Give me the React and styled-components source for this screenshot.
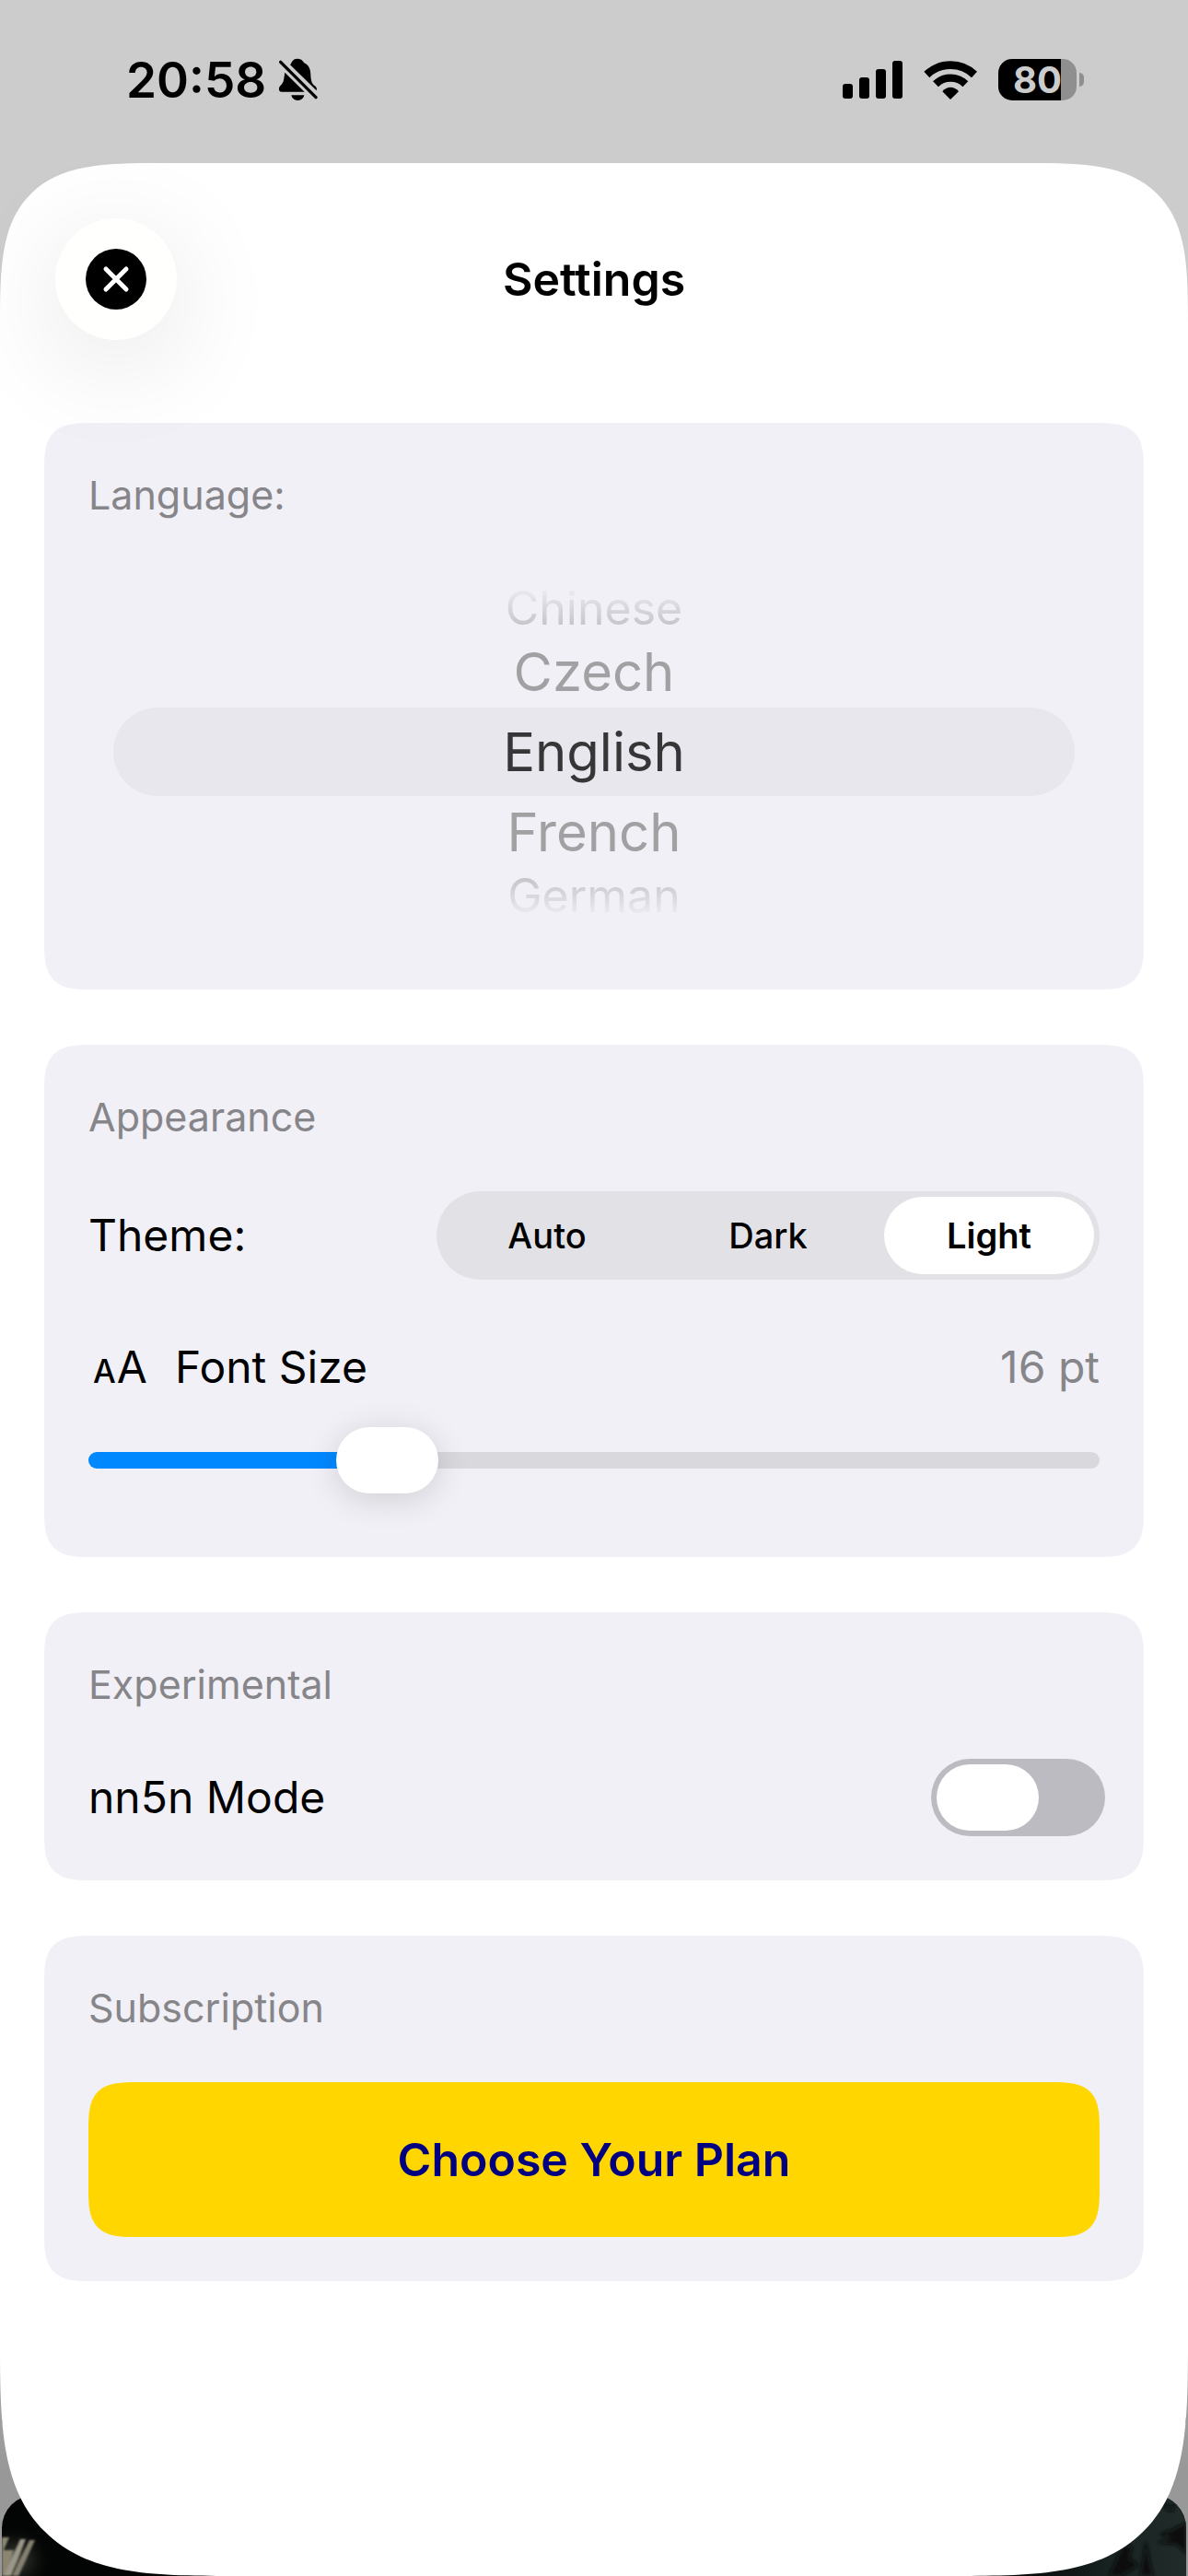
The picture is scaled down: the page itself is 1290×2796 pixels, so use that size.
import React, { useState } from 'react'
import styled, { createGlobalStyle, css } from 'styled-components'

const GlobalStyle = createGlobalStyle`
    * {
        box-sizing: border-box;
    }
    body {
        margin: 0;
        background-color: #cccccc;
        color: #000;
        font-family: Inter, "Liberation Sans", sans-serif;
        font-size: 48px;
        line-height: 66px;
    }
    button, input {
        font-family: inherit;
    }
`

// rounded corners, with the softer continuous curve where the browser knows it
const smoothCorners = (radius, wide) => css`
    border-radius: ${radius};
    @supports (corner-shape: superellipse(1.7)) {
        border-radius: ${wide};
        corner-shape: superellipse(1.7);
    }
`

const visuallyHidden = css`
    position: absolute;
    width: 1px;
    height: 1px;
    margin: 0;
    opacity: 0;
`

const Page = styled.div`
    position: relative;
    min-height: 100vh;
    display: flex;
    flex-direction: column;
    overflow: hidden;
`

const Backdrop = styled.div`
    position: absolute;
    inset: 0;
    display: flex;
    flex-direction: column;
    justify-content: flex-end;
    gap: 46px;
    padding: 0 2px;
    background: linear-gradient(#cccccc 80%, #989898 96%);
`

const BackdropCard = styled.div`
    height: 200px;
    background-color: #050505;
    border-radius: 0 0 40px 40px;
`

const BackdropPhoto = styled.div`
    height: 88px;
    display: flex;
    justify-content: space-between;
    align-items: flex-end;
    overflow: hidden;
    background-color: #030504;
    border-radius: 36px 36px 0 0;
`

const StatusBar = styled.div`
    position: relative;
    height: 177px;
    display: flex;
    align-items: center;
    justify-content: space-between;
    padding: 0 113px 4px 137px;
`

const StatusGroup = styled.div`
    display: flex;
    align-items: center;
    gap: ${props => props.$gap};
`

const Time = styled.span`
    font-size: 53px;
    font-weight: 600;
`

const Battery = styled.div`
    position: relative;
    width: 85px;
    height: 45px;
    margin-right: 8px;
    display: flex;
    align-items: center;
    justify-content: center;
    border-radius: 15px;
    background: linear-gradient(to right, #000 80%, #8f8f8f 80%);
    color: #cccccc;
    font-size: 40px;
    font-weight: 700;
    &::after {
        content: "";
        position: absolute;
        right: -8px;
        width: 5px;
        height: 15px;
        border-radius: 0 8px 8px 0;
        background-color: #8f8f8f;
    }
`

const Sheet = styled.main`
    position: relative;
    flex: 1;
    display: flex;
    flex-direction: column;
    gap: 60px;
    padding: 60px 48px 300px;
    background-color: #fff;
    ${smoothCorners("114px 114px 165px 165px", "174px 174px 252px 252px")}
`

const Header = styled.header`
    position: relative;
    z-index: 1;
    display: grid;
    grid-template-columns: 132px 1fr 132px;
    align-items: center;
    padding: 0 12px 30px;
`

const Title = styled.h1`
    margin: 0;
    text-align: center;
    font-size: 50px;
    font-weight: 600;
`

const CloseButton = styled.button`
    width: 132px;
    height: 132px;
    padding: 0;
    display: flex;
    align-items: center;
    justify-content: center;
    border: none;
    border-radius: 50%;
    background-color: #fffffe;
    box-shadow: 0 24px 120px rgba(0, 0, 0, 0.11);
    cursor: pointer;
`

const Card = styled.section`
    padding: 48px;
    background-color: #f1f0f6;
    ${smoothCorners("36px", "54px")}
`

const CardTitle = styled.h2`
    margin: 0 0 ${props => props.$tight ? "39px" : "51px"};
    color: #86858a;
    font-size: 43px;
    font-weight: 400;
    line-height: 60px;
`

const Wheel = styled.div`
    position: relative;
    display: flex;
    flex-direction: column;
    padding: 24px 27px;
`

const WheelRow = styled.label`
    display: flex;
    align-items: center;
    justify-content: center;
    cursor: pointer;
    ${props => wheelRows[props.$distance]}
`

const wheelRows = {
    "-2": css`
        height: 60px;
        font-size: 50px;
        color: #c6c5ca;
        mask-image: linear-gradient(rgba(0, 0, 0, 0.1) 15%, #000 80%);
    `,
    "-1": css`
        height: 78px;
        font-size: 58px;
        color: #a1a1a3;
    `,
    "0": css`
        height: 96px;
        font-size: 58px;
        color: #363638;
        background-color: #e8e7ed;
        border-radius: 48px;
    `,
    "1": css`
        height: 78px;
        font-size: 58px;
        color: #a1a1a3;
    `,
    "2": css`
        height: 60px;
        font-size: 50px;
        color: #c6c5ca;
        mask-image: linear-gradient(#000 20%, rgba(0, 0, 0, 0.1) 85%);
    `,
}

const HiddenRadio = styled.input`
    ${visuallyHidden}
`

const Row = styled.div`
    display: flex;
    align-items: center;
    justify-content: space-between;
`

const FontRow = styled(Row)`
    margin: 62px 0 11px;
`

const FontLabel = styled.label`
    display: flex;
    align-items: center;
    gap: 30px;
`

const LetterIcon = styled.span`
    display: flex;
    align-items: baseline;
    padding-left: 5px;
    gap: 1px;
`

const SmallLetter = styled.span`
    font-size: 35px;
    font-weight: 500;
    line-height: 40px;
`

const Value = styled.output`
    color: #86858a;
`

const Segmented = styled.div`
    position: relative;
    width: 720px;
    height: 96px;
    display: flex;
    border-radius: 48px;
    background-color: #e2e1e6;
`

const Segment = styled.label`
    flex: 1;
    margin: 6px;
    display: flex;
    align-items: center;
    justify-content: center;
    border-radius: 42px;
    font-size: 38px;
    font-weight: 500;
    cursor: pointer;
    &:has(input:checked) {
        background-color: #fff;
        font-weight: 600;
    }
`

const Slider = styled.input`
    display: block;
    width: 100%;
    height: 114px;
    margin: 0;
    appearance: none;
    background: none;
    cursor: pointer;
    &::-webkit-slider-runnable-track {
        height: 18px;
        border-radius: 9px;
        background: linear-gradient(to right, #0088ff var(--fill), #d9d8dd var(--fill));
    }
    &::-webkit-slider-thumb {
        appearance: none;
        width: 111px;
        height: 72px;
        margin-top: -27px;
        border-radius: 36px;
        background-color: #fff;
        box-shadow: 0 6px 36px rgba(0, 0, 0, 0.14);
    }
`

const Switch = styled.input`
    width: 189px;
    height: 84px;
    margin: 0 -6px 0 0;
    padding: 6px;
    display: flex;
    appearance: none;
    border-radius: 42px;
    background-color: #bcbbc1;
    cursor: pointer;
    &::before {
        content: "";
        width: 111px;
        height: 72px;
        border-radius: 36px;
        background-color: #fff;
    }
    &:checked {
        justify-content: flex-end;
        background-color: #34c759;
    }
`

const PlanButton = styled.button`
    width: 100%;
    height: 168px;
    border: none;
    background-color: #ffd600;
    color: #000080;
    font-size: 50px;
    font-weight: 600;
    cursor: pointer;
    ${smoothCorners("36px", "54px")}
`

const BellOffIcon = () => (
    <svg width="43" height="47" viewBox="903 194 129 141" aria-hidden="true">
        <path d="M942 216C947 212 948 196 966 196C984 196 983 208 992 212C1004 219 1009 232 1009 250C1010 272 1015 278 1023 285C1028 289 1030 293 1028 300Z" />
        <path d="M925 241L989 304H915C908 304 905 299 906 292C907 284 918 281 921 266C923 258 923 250 925 241Z" />
        <path d="M946 315H988C986 325 978 332 967 332C956 332 948 325 946 315Z" />
        <path d="M911 207L1026 322" stroke="#000" strokeWidth="10" strokeLinecap="round" />
    </svg>
)

const SignalIcon = () => (
    <svg width="65" height="41" viewBox="0 0 65 41" aria-hidden="true">
        <rect x="0" y="25" width="11" height="16" rx="3" />
        <rect x="18" y="18" width="11" height="23" rx="3" />
        <rect x="36" y="9" width="11" height="32" rx="3" />
        <rect x="54" y="0" width="11" height="41" rx="3" />
    </svg>
)

const WifiIcon = () => (
    <svg width="58" height="42" viewBox="430 195 174 126" aria-hidden="true">
        <path d="M440 240A112 112 0 0 1 595 240" fill="none" stroke="#000" strokeWidth="26" />
        <path d="M469 271A69 69 0 0 1 566 271" fill="none" stroke="#000" strokeWidth="25" />
        <path d="M491 295C505 277 530 277 544 295L517 321Z" />
    </svg>
)

const CloseIcon = () => (
    <svg width="66" height="66" viewBox="0 0 66 66" aria-hidden="true">
        <circle cx="33" cy="33" r="33" />
        <path d="M22 22L44 44M44 22L22 44" stroke="#fff" strokeWidth="5" strokeLinecap="round" />
    </svg>
)

const PhotoLights = () => (
    <svg width="200" height="84" viewBox="0 0 200 84" aria-hidden="true">
        <defs>
            <filter id="soft">
                <feGaussianBlur stdDeviation="1" />
            </filter>
            <radialGradient id="glow">
                <stop offset="0" stopColor="#4b4d42" />
                <stop offset="1" stopColor="#030504" stopOpacity="0" />
            </radialGradient>
        </defs>
        <ellipse cx="14" cy="66" rx="42" ry="38" fill="url(#glow)" />
        <g filter="url(#soft)">
            <path d="M0 42L8 42L2 56H13L4 84H0Z" fill="#8b8672" />
            <path d="M20 44H26L10 84H2Z" fill="#9b9789" />
            <path d="M30 45H36L18 84H11Z" fill="#85816f" />
        </g>
    </svg>
)

const PhotoForest = () => (
    <svg width="200" height="88" viewBox="0 0 200 88" aria-hidden="true">
        <defs>
            <linearGradient id="forest">
                <stop offset="0" stopColor="#030504" />
                <stop offset="0.6" stopColor="#182322" />
                <stop offset="1" stopColor="#202b2a" />
            </linearGradient>
            <filter id="haze">
                <feGaussianBlur stdDeviation="2" />
            </filter>
        </defs>
        <rect width="200" height="88" fill="url(#forest)" />
        <g filter="url(#haze)" fill="#0a1110">
            <path d="M200 30L184 38L170 43L184 46L168 52L190 54L200 64Z" />
            <path d="M156 48L160 70L164 88H150L153 70Z" />
            <path d="M176 6L182 14L188 8L186 18L178 16Z" />
            <path d="M132 54L142 56L138 68L148 76L130 88H116Z" />
        </g>
    </svg>
)

const languages = ["Chinese", "Czech", "English", "French", "German"]
const themes = ["Auto", "Dark", "Light"]
const MIN_SIZE = 10
const MAX_SIZE = 32

const App = () => {
    const [theme, setTheme] = useState("Light")
    const [fontSize, setFontSize] = useState(16)
    const [nn5n, setNn5n] = useState(false)

    const fill = ((fontSize - MIN_SIZE) / (MAX_SIZE - MIN_SIZE)) * 100

    return (
        <Page>
            <GlobalStyle />
            <Backdrop>
                <BackdropCard />
                <BackdropPhoto>
                    <PhotoLights />
                    <PhotoForest />
                </BackdropPhoto>
            </Backdrop>

            <StatusBar>
                <StatusGroup $gap="13px">
                    <Time>20:58</Time>
                    <BellOffIcon />
                </StatusGroup>
                <StatusGroup $gap="23px">
                    <SignalIcon />
                    <WifiIcon />
                    <Battery>80</Battery>
                </StatusGroup>
            </StatusBar>

            <Sheet>
                <Header>
                    <CloseButton aria-label="Close">
                        <CloseIcon />
                    </CloseButton>
                    <Title>Settings</Title>
                </Header>

                <Card>
                    <CardTitle $tight id="language">Language:</CardTitle>
                    <Wheel role="radiogroup" aria-labelledby="language">
                        {languages.map((name, index) => (
                            <WheelRow key={name} $distance={index - 2}>
                                <HiddenRadio type="radio" name="language" defaultChecked={index === 2} />
                                {name}
                            </WheelRow>
                        ))}
                    </Wheel>
                </Card>

                <Card>
                    <CardTitle>Appearance</CardTitle>
                    <Row>
                        <span id="theme">Theme:</span>
                        <Segmented role="radiogroup" aria-labelledby="theme">
                            {themes.map(name => (
                                <Segment key={name}>
                                    <HiddenRadio
                                        type="radio"
                                        name="theme"
                                        checked={theme === name}
                                        onChange={() => setTheme(name)}
                                    />
                                    {name}
                                </Segment>
                            ))}
                        </Segmented>
                    </Row>
                    <FontRow>
                        <FontLabel htmlFor="font-size">
                            <LetterIcon aria-hidden="true">
                                <SmallLetter>A</SmallLetter>
                                <span>A</span>
                            </LetterIcon>
                            Font Size
                        </FontLabel>
                        <Value htmlFor="font-size">{fontSize} pt</Value>
                    </FontRow>
                    <Slider
                        id="font-size"
                        type="range"
                        min={MIN_SIZE}
                        max={MAX_SIZE}
                        value={fontSize}
                        onChange={e => setFontSize(Number(e.target.value))}
                        style={{ "--fill": `${fill}%` }}
                    />
                </Card>

                <Card>
                    <CardTitle>Experimental</CardTitle>
                    <Row>
                        <label htmlFor="nn5n">nn5n Mode</label>
                        <Switch
                            id="nn5n"
                            type="checkbox"
                            role="switch"
                            checked={nn5n}
                            onChange={e => setNn5n(e.target.checked)}
                        />
                    </Row>
                </Card>

                <Card>
                    <CardTitle>Subscription</CardTitle>
                    <PlanButton>Choose Your Plan</PlanButton>
                </Card>
            </Sheet>
        </Page>
    )
}

export default App
